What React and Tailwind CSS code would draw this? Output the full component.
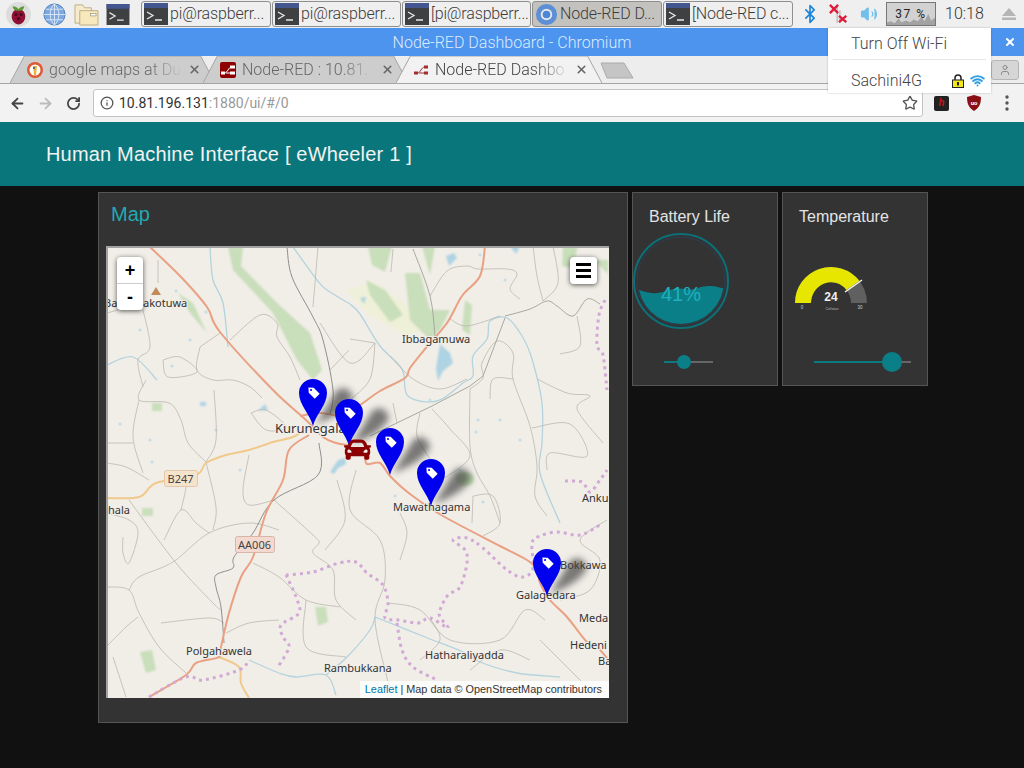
import { ArrowLeft, ArrowRight, RotateCw, Star, Info, X, Bluetooth, Volume2, Wifi, User } from "lucide-react";
import { FaCar } from "react-icons/fa";

const taskButtons = [
  { label: "pi@raspberr...", w: "w-[130px]" },
  { label: "pi@raspberr...", w: "w-[129px]" },
  { label: "[pi@raspberr...", w: "w-[129px]" },
  { label: "Node-RED D...", w: "w-[130px]", active: true, chrome: true },
  { label: "[Node-RED c...", w: "w-[130px]" },
];

const markers = [
  [313, 426],
  [349, 446],
  [390, 475],
  [431, 506],
  [547, 596],
];

const labels = [
  { x: 275, y: 433, t: "Kurunegala", size: 13 },
  { x: 402, y: 343, t: "Ibbagamuwa", size: 11 },
  { x: 393, y: 511, t: "Mawathagama", size: 11 },
  { x: 516, y: 599, t: "Galagedara", size: 11 },
  { x: 560, y: 569, t: "Bokkawa", size: 11 },
  { x: 582, y: 502, t: "Anku", size: 11 },
  { x: 579, y: 622, t: "Meda", size: 11 },
  { x: 570, y: 649, t: "Hedeni", size: 11 },
  { x: 598, y: 665, t: "Ba", size: 11 },
  { x: 186, y: 655, t: "Polgahawela", size: 11 },
  { x: 324, y: 672, t: "Rambukkana", size: 11 },
  { x: 425, y: 659, t: "Hatharaliyadda", size: 11 },
  { x: 108, y: 514, t: "hala", size: 11 },
  { x: 104, y: 307, t: "Ba", size: 11 },
  { x: 143, y: 307, t: "akotuwa", size: 11 },
];

const minorRoads = [
  [129, 500, 176, 563, 213, 603, 221, 610],
  [106, 587, 129, 590, 139, 613, 159, 647, 186, 673],
  [129, 590, 139, 577, 173, 562, 209, 533, 249, 523, 279, 530],
  [209, 533, 196, 523, 181, 510, 164, 540],
  [181, 510, 186, 487, 184, 478],
  [206, 462, 216, 507, 213, 530],
  [206, 462, 188, 443, 181, 420, 169, 403, 139, 400, 146, 380],
  [139, 400, 133, 437, 143, 473],
  [214, 390, 216, 440, 206, 462],
  [249, 455, 243, 490, 249, 505, 274, 500],
  [274, 500, 313, 535, 319, 543, 313, 553, 333, 570, 336, 600, 356, 620],
  [253, 563, 279, 577, 306, 600, 340, 607],
  [306, 600, 306, 647, 346, 657],
  [161, 623, 209, 618, 224, 623],
  [226, 633, 249, 623, 279, 620],
  [106, 443, 133, 443],
  [106, 463, 126, 467, 149, 480],
  [106, 513, 129, 520, 138, 533, 129, 563, 123, 553, 123, 537],
  [113, 657, 126, 697],
  [106, 647, 126, 627, 138, 617],
  [251, 413, 266, 410, 286, 427, 266, 430, 251, 413],
  [430, 296, 447, 271, 467, 266, 478, 269, 507, 269, 517, 274, 510, 289, 520, 299],
  [533, 246, 537, 276, 543, 301],
  [553, 246, 558, 283, 543, 301],
  [577, 316, 580, 346, 560, 354],
  [470, 389, 483, 378, 482, 363, 497, 341, 513, 353, 513, 379, 530, 426, 537, 466, 535, 496, 547, 516],
  [470, 389, 470, 446, 477, 473, 490, 496, 500, 523],
  [513, 379, 493, 379, 490, 399],
  [537, 379, 567, 393, 590, 396, 577, 409, 603, 443],
  [532, 428, 570, 424, 587, 456, 550, 453, 547, 470],
  [420, 413, 417, 436, 430, 459],
  [432, 409, 450, 429, 470, 456, 443, 479],
  [375, 343, 370, 379, 350, 400],
  [350, 339, 375, 343],
  [393, 403, 397, 423],
  [473, 496, 493, 496, 500, 523, 483, 536],
  [473, 496, 472, 523],
  [400, 513, 407, 533, 400, 560],
  [390, 356, 413, 379, 440, 389, 467, 379],
  [450, 319, 467, 326, 500, 316],
  [200, 347, 197, 370, 213, 380, 233, 380, 250, 387, 262, 398],
  [200, 347, 220, 333],
  [230, 340, 260, 315, 277, 323, 277, 337, 290, 357, 300, 380],
  [163, 360, 168, 377, 197, 372, 180, 357, 163, 360],
  [107, 313, 143, 303],
  [143, 310, 150, 347, 138, 360, 143, 387],
  [158, 260, 158, 283],
  [318, 247, 313, 307],
  [320, 323, 350, 363, 375, 343],
  [337, 480, 345, 520, 325, 550],
  [356, 470, 350, 510, 380, 540, 385, 580, 375, 620, 390, 690],
  [388, 603, 420, 610, 450, 640, 500, 640, 525, 610, 545, 620],
  [430, 618, 440, 640, 420, 660],
  [560, 600, 590, 590, 600, 560, 580, 540, 607, 520],
  [540, 640, 560, 660, 590, 690],
  [470, 670, 500, 650, 530, 660],
  [393, 249, 391, 272],
  [349, 350, 330, 370],
];

const forests = [
  "M228 247H243L241 266L277 303L310 333L322 370L313 380L297 360L273 313L233 270Z",
  "M178 293L193 303L207 333L190 313Z",
  "M368 246H392L385 272L372 265Z",
  "M366 280L385 290L403 315L390 322L370 295Z",
  "M405 273H420L430 310L450 310L440 330L430 340L410 320Z",
  "M422 246H435L430 275Z",
  "M465 300L472 305L470 335L462 330Z",
  "M563 246H578L572 268L562 266Z",
  "M594 260H608V274Z",
  "M152 403H162V411H152Z",
  "M142 508H153V516H142Z",
  "M140 652L152 650L156 670L146 673Z",
  "M315 607H326L328 622L318 626Z",
];

const water = [
  "M440 344L450 353L453 363L443 371L438 381L436 369L438 356Z",
  "M330 472L338 460L345 458L346 464L338 468L334 474Z",
  "M446 256L454 253L457 258L449 266Z",
  "M510 246H520L516 254Z",
  "M360 298L366 297L364 304Z",
  "M258 411L265 404L268 410Z",
  "M200 402H206V406H200Z",
];

const spots = [
  [120, 424], [152, 462], [184, 477], [240, 470], [176, 291], [206, 312], [140, 330], [172, 366],
  [190, 340], [480, 255], [505, 280], [476, 432], [478, 420], [520, 440], [483, 502], [395, 496],
  [500, 420], [460, 470], [430, 400], [150, 440], [216, 430],
];

const rivers = [
  [350, 304, 360, 314, 380, 346, 402, 369, 408, 396, 437, 401, 463, 383, 473, 376, 473, 356, 487, 339, 490, 321, 507, 318, 522, 336, 532, 359, 542, 403, 542, 443, 540, 473, 560, 523],
  [293, 247, 317, 280, 327, 290, 350, 304],
  [210, 247, 213, 280, 223, 303, 228, 347],
  [107, 365, 133, 357, 157, 380],
  [249, 660, 279, 673, 296, 677, 326, 675, 336, 695],
  [375, 617, 425, 637, 463, 652, 480, 662, 517, 673, 560, 677],
  [375, 617, 370, 630, 347, 657, 326, 675],
];

const boundaries = [
  [286, 575, 313, 572, 339, 563, 356, 562, 367, 573, 383, 585, 388, 603, 385, 618, 398, 620, 418, 623, 430, 618, 448, 628, 440, 617, 440, 610, 448, 595, 460, 587, 467, 563, 465, 550, 453, 540, 467, 538, 483, 548, 507, 570, 523, 577, 533, 568, 532, 543, 540, 536, 557, 532, 580, 535, 600, 525],
  [286, 575, 296, 597, 299, 613, 281, 625, 283, 637, 289, 647, 278, 667],
  [397, 623, 402, 650, 413, 667, 437, 680],
  [149, 697, 186, 677, 203, 680, 239, 670, 249, 660],
  [565, 481, 582, 482, 590, 492, 600, 480, 607, 470],
  [605, 300, 599, 315, 597, 345, 603, 355, 607, 390],
];

// turns a flat list of points into a rounded path
function smooth(p) {
  let d = `M${p[0]} ${p[1]}`;
  for (let i = 0; i < p.length - 2; i += 2) {
    const x0 = p[Math.max(i - 2, 0)];
    const y0 = p[Math.max(i - 1, 1)];
    const x1 = p[i];
    const y1 = p[i + 1];
    const x2 = p[i + 2];
    const y2 = p[i + 3];
    const x3 = p[Math.min(i + 4, p.length - 2)];
    const y3 = p[Math.min(i + 5, p.length - 1)];
    d += `C${x1 + (x2 - x0) / 6} ${y1 + (y2 - y0) / 6} ${x2 - (x3 - x1) / 6} ${y2 - (y3 - y1) / 6} ${x2} ${y2}`;
  }
  return d;
}

function Terminal({ className }) {
  return (
    <svg viewBox="0 0 24 22" className={className}>
      <rect width="24" height="22" fill="#3f4042" />
      <rect width="24" height="5" fill="#44568f" />
      <path d="M3 9l6 3.500-6 3.500M11 17h7" fill="none" stroke="#e8e8e8" strokeWidth="1.300" />
    </svg>
  );
}

function TaskButton({ label, w, active, chrome }) {
  return (
    <div className={`${w} h-[26px] flex items-center gap-[2px] px-[2px] rounded-[3px] border border-[#8f8f8f] shrink-0 ${active ? "bg-[#c4c2bf]" : "bg-[#efefef]"}`}>
      {chrome ? (
        <svg viewBox="0 0 24 24" className="w-[23px] h-[23px] shrink-0">
          <circle cx="12" cy="12" r="11" fill="#5c8fd6" />
          <circle cx="12" cy="12" r="6" fill="#e8e8e8" />
          <circle cx="12" cy="12" r="4" fill="#4b86d8" />
        </svg>
      ) : (
        <Terminal className="w-[24px] h-[22px] shrink-0" />
      )}
      <span className="text-[16px] font-light tracking-[-0.150px] text-[#3c3c3c] whitespace-nowrap">{label}</span>
    </div>
  );
}

function Taskbar() {
  return (
    <div className="h-[28px] bg-[#efefef] flex items-center font-['Roboto',sans-serif]">
      <div className="w-[141px] flex items-center shrink-0">
        <svg viewBox="0 0 24 24" className="w-[25px] h-[25px] ml-[6px]">
          <circle cx="12" cy="12" r="12" fill="#dcdcdc" />
          <path d="M12 7c4 0 6.500 3 6.500 7s-3 7.500-6.500 7.500-6.500-3.500-6.500-7.500 2.500-7 6.500-7z" fill="#8e1034" />
          <path d="M6.500 4c2 0 4.500 1 5.500 3 1-2 3.500-3 5.500-3 0 3-2.500 4.500-5.500 4.500S6.500 7 6.500 4z" fill="#5c9a32" />
          <circle cx="9.500" cy="12" r="1.500" fill="#4c0a1c" />
          <circle cx="14.500" cy="12" r="1.500" fill="#4c0a1c" />
          <circle cx="12" cy="16" r="1.500" fill="#4c0a1c" />
        </svg>
        <svg viewBox="0 0 24 24" className="w-[23px] h-[23px] ml-[12px]">
          <circle cx="12" cy="12" r="11" fill="#7fa9de" stroke="#4f7fbd" />
          <path d="M1 12h22M12 1v22M3 6.500h18M3 17.500h18M12 1c-6 5-6 17 0 22M12 1c6 5 6 17 0 22" fill="none" stroke="#d7e6f7" strokeWidth="1" />
        </svg>
        <svg viewBox="0 0 26 24" className="w-[25px] h-[23px] ml-[8px]">
          <path d="M1 2h8l2 3h7v16H1z" fill="#f6eccb" stroke="#b9ac85" />
          <path d="M6 8h19v15H6z" fill="#f7e9bb" stroke="#b9ac85" />
          <rect x="17" y="11" width="6" height="2.500" fill="#f8f8f2" stroke="#8c8670" strokeWidth=".6" />
        </svg>
        <Terminal className="w-[24px] h-[21px] ml-[7px]" />
      </div>
      <div className="flex items-center gap-[1px]">
        {taskButtons.map((b, i) => (
          <TaskButton key={i} {...b} />
        ))}
      </div>
      <div className="flex items-center flex-1 h-full">
        <Bluetooth className="w-[20px] h-[22px] ml-[7px] text-[#1c85d8]" strokeWidth={2} />
        <svg viewBox="0 0 22 24" className="w-[20px] h-[22px] ml-[9px]">
          <path d="M9 2v20M12 8v14" stroke="#bbb" strokeWidth="1.500" />
          <path d="M1 2l9 9M10 2l-9 9M11 14l8 7M19 14l-8 7" stroke="#e01b3a" strokeWidth="2.500" />
        </svg>
        <Volume2 className="w-[18px] h-[18px] ml-[11px] text-[#72bfeb]" fill="#72bfeb" strokeWidth={1.500} />
        <div className="relative w-[50px] h-[24px] ml-[8px] border border-[#777] bg-[#d2d2d2] flex items-center justify-center text-[12px] text-[#222] tracking-[1.500px]">
          <svg viewBox="0 0 50 24" preserveAspectRatio="none" className="absolute inset-0 w-full h-full">
            <path d="M0 24V21L4 20L8 22L12 17L15 21L20 19L24 21L28 18L32 20L36 15L39 20L43 12L46 19L50 16V24Z" fill="#a3a3a3" />
          </svg>
          <span className="relative">37 %</span>
        </div>
        <span className="text-[16px] font-light text-[#333] ml-[9px]">10:18</span>
        <svg viewBox="0 0 14 12" className="w-[14px] h-[12px] ml-[18px]">
          <path d="M7 0l7 8H0zM0 9.500h14V12H0z" fill="#b5b5b5" />
        </svg>
      </div>
    </div>
  );
}

function Tab({ title, icon, active, w }) {
  return (
    <div className={`relative ${w} h-[27px] -mr-[12px] shrink-0 flex items-center pl-[17px] pr-[14px] ${active ? "z-10" : ""}`}>
      <svg viewBox="0 0 100 27" preserveAspectRatio="none" className="absolute inset-0 w-full h-full">
        <path d="M0 27L7 0H93L100 27Z" fill={active ? "#f2f2f2" : "#cdcdcd"} />
        <path d="M0 27L7 0H93L100 27" fill="none" stroke="#a5a5a5" strokeWidth="1" vectorEffect="non-scaling-stroke" />
      </svg>
      <span className="relative w-[16px] h-[16px] mr-[6px] shrink-0">{icon}</span>
      <span className={`relative flex-1 whitespace-nowrap text-[16px] font-light [mask-image:linear-gradient(to_right,black_75%,transparent)] ${active ? "text-[#444]" : "text-[#666]"}`}>{title}</span>
      <X className="relative w-[13px] h-[13px] ml-[6px] text-[#666] shrink-0" strokeWidth={3} />
    </div>
  );
}

function Chrome() {
  return (
    <div className="font-['Roboto',sans-serif]">
      <div className="h-[28px] bg-[#4d94ef] relative flex items-center justify-center pt-[1px] text-[16px] font-light text-[#dcebfd]">
        Node-RED Dashboard - Chromium
        <X className="absolute right-[8px] top-[8px] w-[12px] h-[12px] text-white" strokeWidth={4} />
      </div>
      <div className="h-[28px] bg-[#ededed] flex items-end pl-[10px] border-b border-[#a5a5a5]">
        <Tab
          w="w-[205px]"
          title="google maps at Du"
          icon={
            <svg viewBox="0 0 16 16" className="w-full h-full">
              <circle cx="8" cy="8" r="8" fill="#de5833" />
              <circle cx="8" cy="8" r="5.500" fill="#fff" />
              <path d="M6 4h4l-1 9H7z" fill="#e8b73a" />
              <circle cx="7" cy="6" r="1" fill="#2d4f8e" />
            </svg>
          }
        />
        <Tab
          w="w-[205px]"
          title="Node-RED : 10.81."
          icon={
            <svg viewBox="0 0 16 16" className="w-full h-full">
              <rect width="16" height="16" rx="2" fill="#8f0000" />
              <path d="M1 11h3c4 0 4-6 8-6h3M6 11h9" fill="none" stroke="#fff" strokeWidth="1" />
              <rect x="10" y="3.500" width="5" height="3" fill="#fff" />
              <rect x="10" y="9.500" width="5" height="3" fill="#fff" />
              <rect x="1" y="9.500" width="4" height="3" fill="#fff" />
            </svg>
          }
        />
        <Tab
          active
          w="w-[206px]"
          title="Node-RED Dashbo"
          icon={
            <svg viewBox="0 0 16 16" className="w-full h-full">
              <path d="M1 11h3c4 0 4-6 8-6h3M6 11h9" fill="none" stroke="#a03030" strokeWidth="1" />
              <rect x="11" y="3.500" width="4" height="3" fill="#a03030" />
              <rect x="11" y="9.500" width="4" height="3" fill="#a03030" />
              <rect x="1" y="9.500" width="4" height="3" fill="#a03030" />
            </svg>
          }
        />
        <svg viewBox="0 0 34 17" className="w-[34px] h-[17px] ml-[10px] mb-[4px] shrink-0">
          <path d="M1 1h23l9 15H7z" fill="#c5c5c5" stroke="#ababab" strokeLinejoin="round" />
        </svg>
        <div className="ml-auto mr-[5px] mb-[3px] w-[28px] h-[20px] rounded-[3px] bg-[#d6d6d6] border border-[#b5b5b5] flex items-center justify-center">
          <User className="w-[12px] h-[12px] text-[#888]" />
        </div>
      </div>
      <div className="h-[38px] bg-[#f2f2f2] flex items-center">
        <ArrowLeft className="w-[17px] h-[17px] ml-[9px] text-[#444]" strokeWidth={2.500} />
        <ArrowRight className="w-[17px] h-[17px] ml-[11px] text-[#bbb]" strokeWidth={2.500} />
        <RotateCw className="w-[15px] h-[15px] ml-[12px] text-[#444]" strokeWidth={2.800} />
        <div className="w-[830px] h-[28px] ml-[12px] bg-white border border-[#c4c4c4] rounded-[3px] flex items-center pl-[6px]">
          <Info className="w-[14px] h-[14px] text-[#555]" strokeWidth={2.200} />
          <span className="ml-[5px] text-[14px] text-[#333]">10.81.196.131</span>
          <span className="text-[14px] text-[#999]">:1880/ui/#/0</span>
          <Star className="w-[16px] h-[16px] ml-auto mr-[4px] text-[#555]" strokeWidth={2} />
        </div>
        <div className="w-[15px] h-[15px] ml-[11px] bg-[#222] rounded-[2px] flex items-center justify-center text-[11px] italic font-bold text-[#c01818]">h</div>
        <svg viewBox="0 0 16 16" className="w-[16px] h-[16px] ml-[17px]">
          <path d="M8 0l7 2c0 7-2 11-7 14C3 13 1 9 1 2z" fill="#8a0f14" />
          <text x="8" y="10" textAnchor="middle" fontSize="6" fontWeight="700" fill="#fff">uo</text>
        </svg>
        <svg viewBox="0 0 4 16" className="w-[4px] h-[16px] ml-[23px]">
          <circle cx="2" cy="2" r="1.700" fill="#555" />
          <circle cx="2" cy="8" r="1.700" fill="#555" />
          <circle cx="2" cy="14" r="1.700" fill="#555" />
        </svg>
      </div>
    </div>
  );
}

function WifiMenu() {
  return (
    <div className="absolute left-[828px] top-[28px] w-[163px] h-[65px] bg-white shadow-[0_0_2px_rgba(0,0,0,0.25)] font-['Roboto',sans-serif] text-[16px] font-light text-[#444] px-[5px]">
      <div className="h-[32px] flex items-center pl-[18px] border-b border-[#e6e6e6]">Turn Off Wi-Fi</div>
      <div className="h-[33px] flex items-center pl-[18px] pt-[8px]">
        Sachini4G
        <svg viewBox="0 0 12 14" className="w-[12px] h-[14px] ml-auto">
          <path d="M3 6V4a3 3 0 0 1 6 0v2" fill="none" stroke="#222" strokeWidth="1.500" />
          <rect x=".5" y="6" width="11" height="7.500" fill="#f2e61e" stroke="#222" />
          <rect x="5" y="8" width="2" height="3.500" fill="#222" />
        </svg>
        <Wifi className="w-[15px] h-[15px] ml-[6px] mr-[1px] text-[#2b9ce6]" strokeWidth={3} />
      </div>
    </div>
  );
}

function Pin({ x, y }) {
  return (
    <g transform={`translate(${x} ${y})`}>
      <path d="M0 0C-3-12-14-21-14-33A14 14 0 1 1 14-33C14-21 3-12 0 0Z" fill="#0000ee" />
      <g transform="translate(0 -34) rotate(-45)">
        <path d="M-3.500-2.500L0-6.500L3.500-2.500V6H-3.500Z" fill="#fff" />
        <circle cx="0" cy="-2.800" r="1" fill="#0000ee" />
      </g>
    </g>
  );
}

function Shield({ x, y, w, h, t, fill, stroke }) {
  return (
    <g>
      <rect x={x + 0.5} y={y + 0.5} width={w} height={h} rx="2" fill={fill} stroke={stroke} />
      <text x={x + w / 2} y={y + 12.500} textAnchor="middle" fontSize="11" fill="#444">{t}</text>
    </g>
  );
}

function MapTiles() {
  return (
    <svg viewBox="108 248 501 450" className="absolute inset-0 w-full h-full" style={{ fontFamily: "'Noto Sans', sans-serif" }}>
      <defs>
        <filter id="blur" x="-50%" y="-50%" width="200%" height="200%"><feGaussianBlur stdDeviation="3.500" /></filter>
        <filter id="soft"><feGaussianBlur stdDeviation="1.500" /></filter>
        <filter id="edge"><feGaussianBlur stdDeviation=".9" /></filter>
      </defs>
      <rect x="100" y="240" width="520" height="470" fill="#f1eee8" />
      <path d="M345 290L375 282L400 300L430 330L405 335L370 315Z" fill="#eff0d8" filter="url(#soft)" />
      <g fill="#c9deba" filter="url(#edge)">
        {forests.map((d) => (
          <path key={d} d={d} />
        ))}
      </g>
      <ellipse cx="465" cy="479" rx="9" ry="7" fill="#bcd8aa" filter="url(#soft)" />
      <g fill="#aed3e3" filter="url(#edge)">
        {water.map((d) => (
          <path key={d} d={d} />
        ))}
      </g>
      <g fill="#c4dde6">
        {spots.map(([x, y]) => (
          <circle key={x + "-" + y} cx={x} cy={y} r="1.600" />
        ))}
      </g>
      <g fill="none" stroke="#b4d3de" strokeWidth="1.300">
        {rivers.map((r, i) => (
          <path key={i} d={smooth(r)} />
        ))}
      </g>
      <g fill="none" stroke="#bab7af" strokeWidth=".8">
        {minorRoads.map((r, i) => (
          <path key={i} d={smooth(r)} />
        ))}
      </g>
      <g fill="none" stroke="#8f8f8f" strokeWidth="1">
        <path d={smooth([287, 247, 292, 277, 313, 317, 323, 340, 333, 390, 330, 415])} />
        <path d={smooth([319, 443, 318, 475, 274, 500, 253, 533, 234, 557, 233, 568, 216, 575, 216, 587, 221, 607, 224, 643])} />
        <path d={smooth([413, 249, 430, 296, 435, 336])} stroke="#a8a8a0" />
        <path d="M370 436L432 406L470 386L483 376L505 318" stroke="#a8a8a0" />
        <path d={smooth([505, 316, 530, 309, 547, 301, 557, 306, 573, 316, 587, 299, 600, 304])} stroke="#a8a8a0" />
      </g>
      <g fill="none" stroke="#f0c98b" strokeWidth="2">
        <path d={smooth([106, 498, 139, 497, 156, 483, 196, 475, 206, 463, 226, 455, 249, 450, 273, 442, 293, 437, 303, 430])} />
        <path d={smooth([219, 657, 239, 667, 241, 683, 249, 698])} />
      </g>
      <g fill="none" stroke="#e9a083" strokeWidth="2">
        <path d={smooth([150, 247, 182, 278, 207, 307, 220, 332, 273, 390, 306, 420, 323, 437, 336, 443, 348, 445])} />
        <path d={smooth([365, 455, 367, 464, 380, 463, 390, 476, 410, 494, 443, 516, 500, 546, 527, 560, 537, 570, 540, 583, 550, 600, 567, 617, 587, 642, 597, 647, 607, 658])} />
        <path d={smooth([485, 246, 480, 276, 462, 296, 447, 323, 425, 349, 410, 368, 405, 378, 380, 391, 363, 403, 345, 415, 333, 415, 319, 413, 300, 416])} />
        <path d={smooth([309, 435, 289, 450, 283, 480, 266, 513, 253, 557, 241, 577, 229, 613, 221, 647, 219, 657, 196, 663, 186, 675, 149, 697])} />
      </g>
      <g fill="none" stroke="#d2a9d6" strokeWidth="3" strokeDasharray="3 4">
        {boundaries.map((r, i) => (
          <path key={i} d={smooth(r)} />
        ))}
      </g>
      <path d="M151 295L156 287L161 295Z" fill="#c08a5c" />
      {labels.map((l) => (
        <text key={l.t + l.x} x={l.x} y={l.y} fontSize={l.size} fill="#333" stroke="#f1eee8" strokeWidth="2" paintOrder="stroke">{l.t}</text>
      ))}
      <Shield x={164} y={470} w={33} h={16} t="B247" fill="#f5e3cc" stroke="#e0c8a8" />
      <Shield x={235} y={536} w={39} h={16} t="AA006" fill="#f3d9cf" stroke="#d9b5a8" />
      {markers.map(([x, y]) => (
        <path key={x} transform={`translate(${x} ${y})`} d="M3-2L24-36Q36-42 40-28Q34-14 3-2Z" fill="#444" opacity=".7" filter="url(#blur)" />
      ))}
      <Pin x={313} y={426} />
      <Pin x={349} y={446} />
      <g transform="translate(344 436)">
        <FaCar size={27} color="#8b0000" />
      </g>
      <Pin x={390} y={475} />
      <Pin x={431} y={506} />
      <Pin x={547} y={596} />
    </svg>
  );
}

function MapPanel() {
  return (
    <div className="w-[530px] h-[531px] bg-[#333333] border border-[#555] pl-[7px] shrink-0">
      <h2 className="text-[20px] leading-[23px] text-[#21aab5] pl-[5px] pt-[10px] h-[53px]">Map</h2>
      <div className="relative w-[503px] h-[452px] border-t-2 border-l-2 border-[#a2a2a2] overflow-hidden">
        <MapTiles />
        <div className="absolute left-[9px] top-[9px] w-[26px] rounded-[4px] bg-white shadow-[0_1px_5px_rgba(0,0,0,0.65)] text-black font-bold">
          <div className="h-[27px] border-b border-[#ccc] flex items-center justify-center text-[18px]">+</div>
          <div className="h-[26px] flex items-center justify-center text-[18px]">-</div>
        </div>
        <div className="absolute right-[12px] top-[9px] w-[27px] h-[27px] rounded-[4px] bg-white shadow-[0_1px_5px_rgba(0,0,0,0.65)] flex flex-col items-center justify-center gap-[3px]">
          <div className="w-[15px] h-[3px] bg-black" />
          <div className="w-[15px] h-[3px] bg-black" />
          <div className="w-[15px] h-[3px] bg-black" />
        </div>
        <div className="absolute right-0 bottom-0 h-[17px] w-[249px] bg-white/80 flex items-center justify-end pr-[7px] text-[10.860px] text-[#333] whitespace-nowrap">
          <span className="text-[#0078a8]">Leaflet</span>&nbsp;| Map data © OpenStreetMap contributors
        </div>
      </div>
    </div>
  );
}

function Slider({ w, at, r, ml }) {
  return (
    <div className={`relative ${w} ${ml} h-[2px] bg-[#666]`}>
      <div className={`h-full bg-[#0b7a80] ${at}`} />
      <div className={`absolute top-1/2 -translate-y-1/2 rounded-full bg-[#0b7f88] ${r}`} />
    </div>
  );
}

function BatteryCard() {
  return (
    <div className="w-[146px] h-[194px] bg-[#333333] border border-[#555] shrink-0">
      <div className="text-[16px] leading-[18px] text-[#e4e4e4] pl-[16px] pt-[15px] h-[40px]">Battery Life</div>
      <svg viewBox="0 0 96 96" className="w-[96px] h-[96px] block">
        <defs>
          <clipPath id="inner"><circle cx="48" cy="48" r="43" /></clipPath>
        </defs>
        <circle cx="48" cy="48" r="47" fill="none" stroke="#0b7078" strokeWidth="2" />
        <circle cx="48" cy="48" r="44" fill="none" stroke="#2a3f55" strokeWidth="1" />
        <path clipPath="url(#inner)" d="M0 55C10 58 15 61 24 60C36 58 42 54 52 56C62 58 68 52 78 53C84 53 88 56 96 56V98H0Z" fill="#0b7f88" />
        <text x="48" y="68" textAnchor="middle" fontSize="20" fill="#1fb0bd">41%</text>
      </svg>
      <div className="mt-[32px]">
        <Slider w="w-[49px]" ml="ml-[31px]" at="w-[20px]" r="left-[13px] w-[14px] h-[14px]" />
      </div>
    </div>
  );
}

function TemperatureCard() {
  return (
    <div className="w-[146px] h-[194px] bg-[#333333] border border-[#555] shrink-0">
      <div className="text-[16px] leading-[18px] text-[#e4e4e4] pl-[16px] pt-[15px] h-[62px]">Temperature</div>
      <svg viewBox="0 0 98 64" className="w-[98px] h-[64px] block">
        <g transform="translate(48 48)">
          <path d="M-36 0A36 36 0 0 1 36 0H20A20 21 0 0 0-20 0Z" fill="#606060" />
          <path d="M-36 0A36 36 0 0 1 28.400-22.200L15.500-13A20 21 0 0 0-20 0Z" fill="#e6e600" />
          <path d="M14-11L31-23" stroke="#f3f3f3" strokeWidth="1.500" />
          <text x="0" y="-2" textAnchor="middle" fontSize="12" fontWeight="700" fill="#eee">24</text>
          <text x="1" y="7" textAnchor="middle" fontSize="4" fill="#bbb">Celsius</text>
          <text x="-29" y="6" textAnchor="middle" fontSize="4.500" fill="#ccc">0</text>
          <text x="29" y="6" textAnchor="middle" fontSize="4.500" fill="#ccc">30</text>
        </g>
      </svg>
      <div className="mt-[42px]">
        <Slider w="w-[97px]" ml="ml-[31px]" at="w-[78px]" r="left-[68px] w-[20px] h-[20px]" />
      </div>
    </div>
  );
}

export default function App() {
  return (
    <div className="relative w-[1024px] h-[768px] overflow-hidden bg-[#111111] font-['Liberation_Sans',Arial,sans-serif]">
      <Taskbar />
      <Chrome />
      <div className="h-[64px] bg-[#09767c] flex items-center pl-[46px] text-[20px] tracking-[0.180px] text-[#f2f2f2]">
        Human Machine Interface [ eWheeler 1 ]
      </div>
      <div className="flex pl-[98px] pt-[6px] gap-[4px]">
        <MapPanel />
        <BatteryCard />
        <TemperatureCard />
      </div>
      <WifiMenu />
    </div>
  );
}
